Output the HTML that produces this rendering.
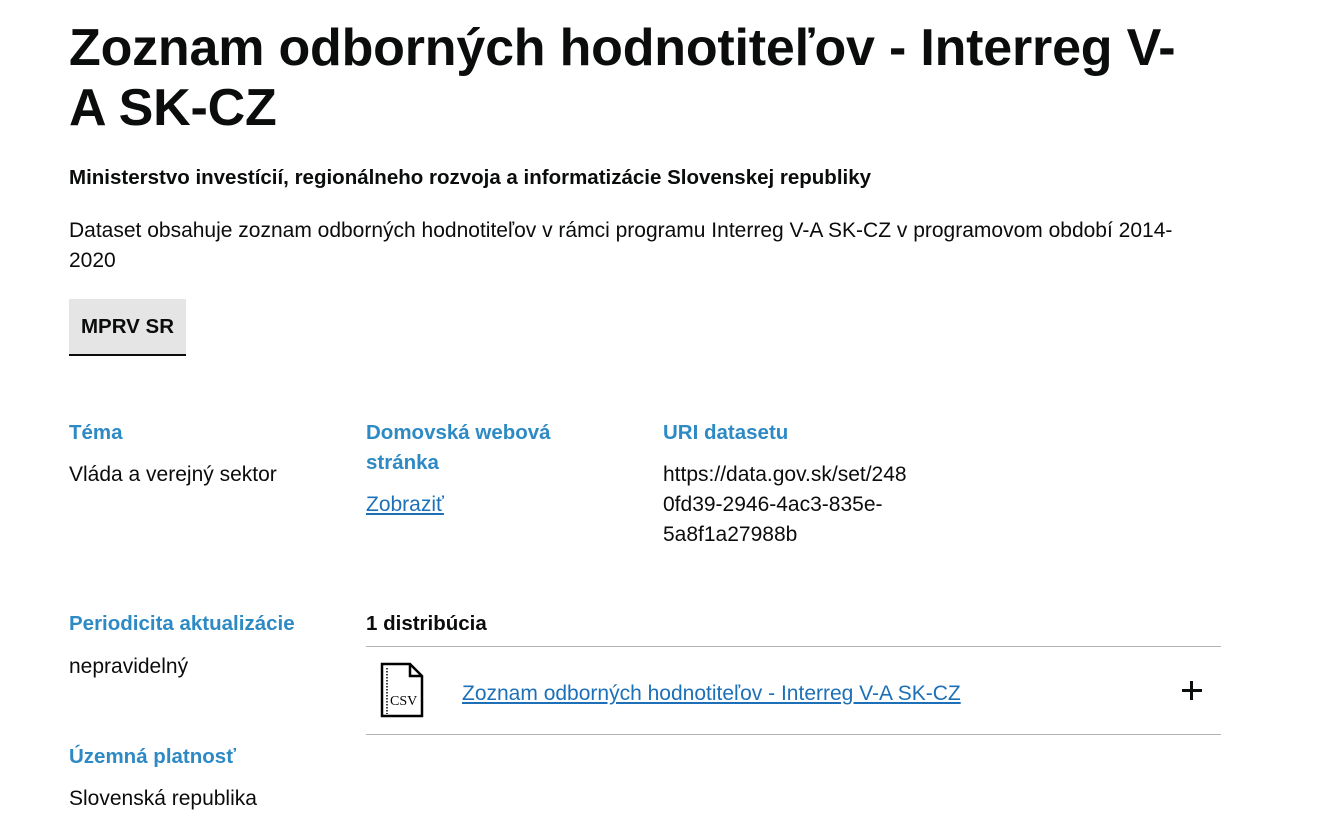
<!DOCTYPE html>
<html><head><meta charset="utf-8"><style>
body{margin:0;background:#fff;font-family:"Liberation Sans",sans-serif;color:#0b0c0c;width:1341px;height:821px;overflow:hidden;position:relative}
.w{position:absolute;left:0;top:2px;width:1341px;height:821px}
.a{position:absolute;white-space:nowrap}
h1{position:absolute;left:69px;top:18px;margin:0;font-size:52px;line-height:60px;font-weight:bold;letter-spacing:-0.2px;white-space:nowrap}
.t{font-size:21px;line-height:30px}
.b{font-weight:bold;font-size:20.5px}
.h{color:#2e8ac4;font-weight:bold;font-size:20.5px;line-height:30px}
a{color:#1d70b8;text-decoration:underline}
</style></head><body>
<h1>Zoznam odborných hodnotiteľov - Interreg V-<br>A SK-CZ</h1>
<div class="w">
<div class="a t b" style="left:69px;top:161px">Ministerstvo investícií, regionálneho rozvoja a informatizácie Slovenskej republiky</div>
<div class="a t" style="left:69px;top:214px">Dataset obsahuje zoznam odborných hodnotiteľov v rámci programu Interreg V-A SK-CZ v programovom období 2014-<br>2020</div>
<div class="a t" style="left:366px;top:488px"><a>Zobraziť</a></div>
<div class="a h" style="left:69px;top:416px">Téma</div>
<div class="a t" style="left:69px;top:458px">Vláda a verejný sektor</div>
<div class="a h" style="left:366px;top:416px">Domovská webová<br>stránka</div>
<div class="a h" style="left:663px;top:416px">URI datasetu</div>
<div class="a t" style="left:663px;top:458px">https://data.gov.sk/set/248<br>0fd39-2946-4ac3-835e-<br>5a8f1a27988b</div>
<div class="a h" style="left:69px;top:607px">Periodicita aktualizácie</div>
<div class="a t" style="left:69px;top:650px">nepravidelný</div>
<div class="a h" style="left:69px;top:740px">Územná platnosť</div>
<div class="a t" style="left:69px;top:782px">Slovenská republika</div>
<div class="a t b" style="left:366px;top:607px">1 distribúcia</div>
<div class="a t" style="left:462px;top:677px"><a>Zoznam odborných hodnotiteľov - Interreg V-A SK-CZ</a></div>
</div>
<div class="a t b" style="left:69px;top:299px;width:117px;height:55px;background:#e5e5e5;border-bottom:2px solid #0b0c0c;line-height:56px;text-align:center">MPRV SR</div>
<div class="a" style="left:366px;top:646px;width:855px;height:87px;border-top:1px solid #b1b4b6;border-bottom:1px solid #b1b4b6"></div>
<svg class="a" style="left:379px;top:662px" width="46" height="56" viewBox="0 0 46 56">
<path d="M3 2H31L43 14V54H3Z M31 2V14H43" fill="#fff" stroke="#000" stroke-width="2.5"/>
<line x1="8" y1="6" x2="8" y2="52" stroke="#000" stroke-width="1.5" stroke-dasharray="1.5 1.5"/>
<text x="11" y="43" font-family="Liberation Serif,serif" font-size="14">CSV</text>
</svg>
<div class="a" style="left:1182px;top:689px;width:20px;height:3px;background:#0b0c0c"></div>
<div class="a" style="left:1190px;top:681px;width:3px;height:19px;background:#0b0c0c"></div>
</body></html>
